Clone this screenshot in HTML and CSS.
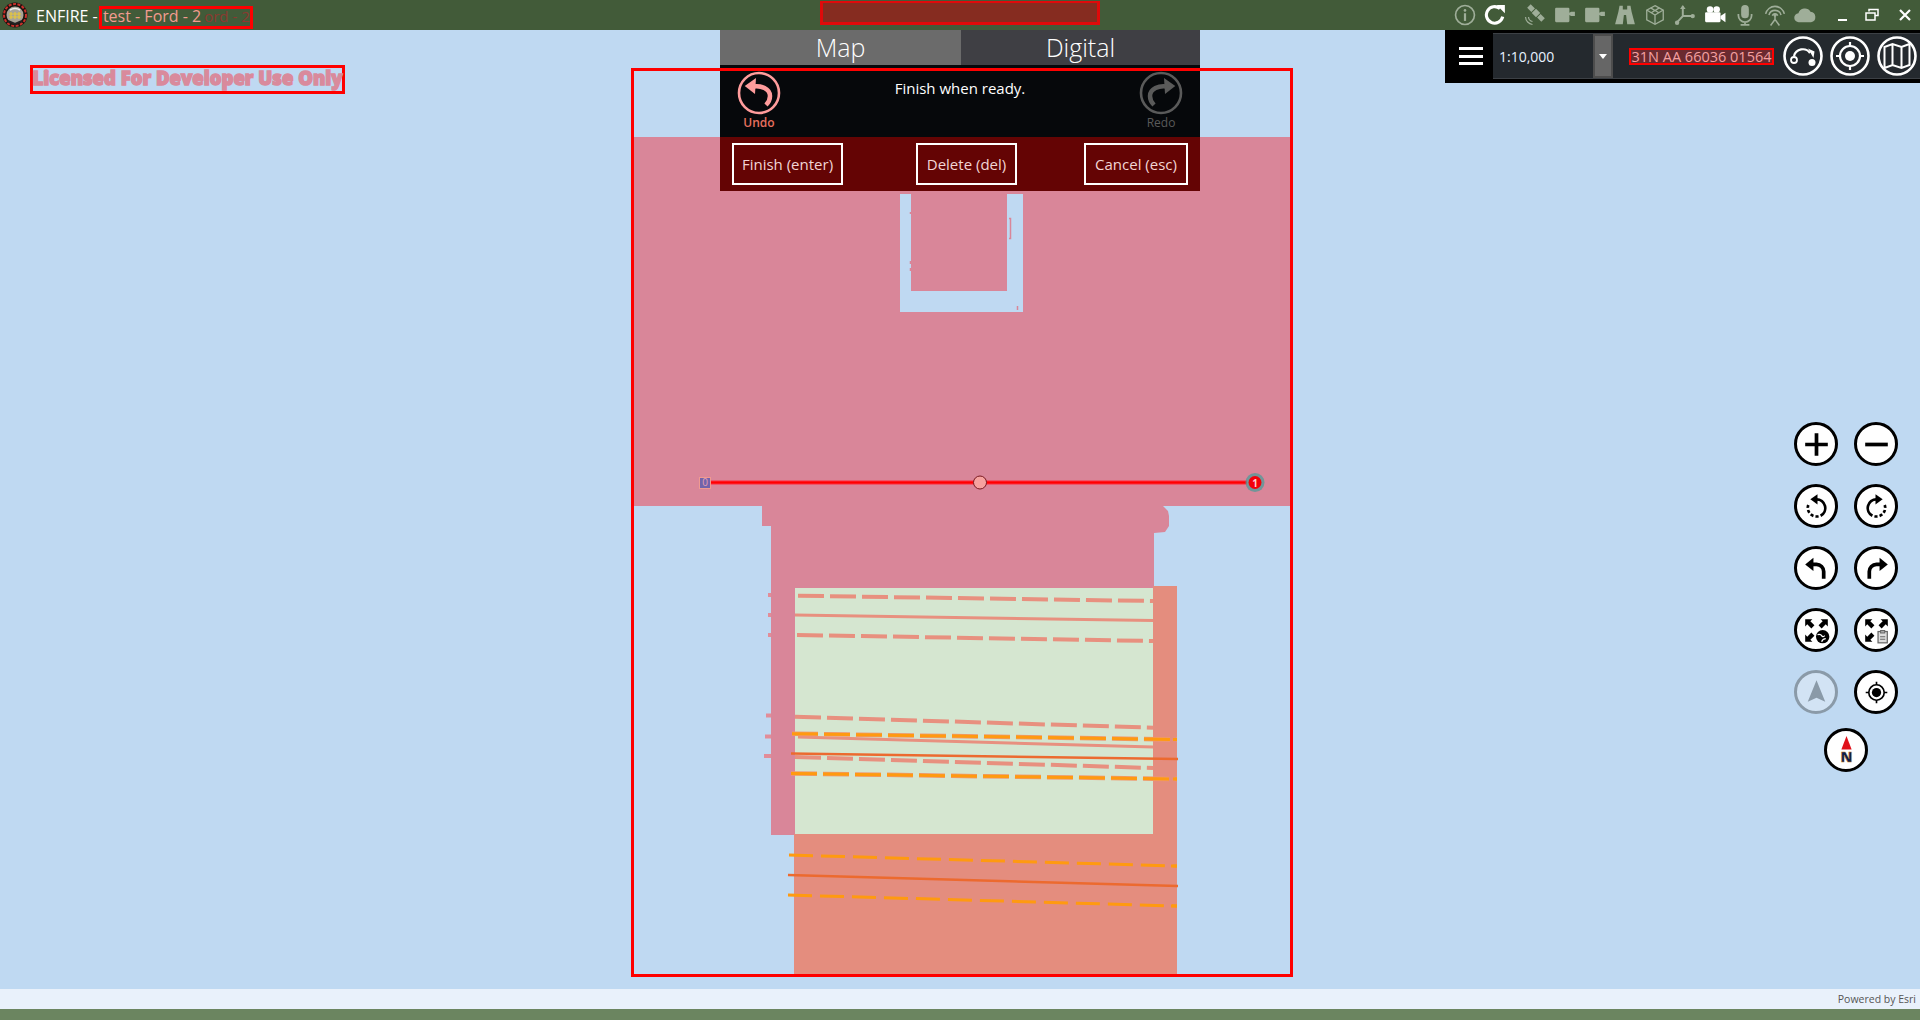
FILE: index.html
```html
<!DOCTYPE html>
<html lang="en">
<head>
<meta charset="utf-8">
<title>ENFIRE</title>
<link rel="stylesheet" href="styles.css">
</head>
<body>
<header class="titlebar">
  <div class="title-left">
    <svg class="logo" viewBox="0 0 26 26" width="26" height="26">
      <circle cx="13" cy="13" r="12.5" fill="#1a1410"/>
      <circle cx="13" cy="13" r="11" fill="none" stroke="#c8302a" stroke-width="2" stroke-dasharray="3 1.5"/>
      <circle cx="13" cy="13" r="8.500" fill="#a8a498"/>
      <path d="M7 12h12M7 15h12M9 10v7M13 10v7M17 10v7" stroke="#e6c83a" stroke-width="1.200" fill="none"/>
      <path d="M6 19l7 3 7-3" stroke="#222" stroke-width="2" fill="none"/>
      <path d="M8 8q5-3 10 0" stroke="#eee" stroke-width="1.500" fill="none"/>
    </svg>
    <span class="app-name">ENFIRE - </span>
    <span class="doc-name">test - Ford - 2</span>
    <span class="doc-ghost">ord - 2</span>
    <span class="redact-title"></span>
  </div>
  <span class="redact-center"></span>
  <div class="title-icons">
    <svg class="ti ti-info" viewBox="0 0 20 20"><circle cx="10" cy="10" r="8.600" fill="none" stroke="currentColor" stroke-width="1.500"/><circle cx="10" cy="5.800" r="1.200" fill="currentColor"/><rect x="9" y="8.400" width="2" height="7" fill="currentColor"/></svg>
    <svg class="ti ti-refresh" viewBox="0 0 20 20"><path d="M17 11.500A7.500 7.500 0 1 1 14.500 4.200" fill="none" stroke="currentColor" stroke-width="2.800"/><path d="M11.500 .8H19v7.500z" fill="currentColor"/></svg>
    <svg class="ti ti-sat" viewBox="0 0 22 22"><g fill="currentColor" transform="rotate(45 12 9)"><rect x="2" y="6.500" width="6" height="5"/><rect x="9" y="6" width="6" height="6"/><rect x="16" y="6.500" width="6" height="5"/></g><path d="M1.500 13a8 8 0 0 0 7 7.500M4.500 13a5 5 0 0 0 4 4.500" fill="none" stroke="currentColor" stroke-width="1.200"/></svg>
    <svg class="ti ti-video" viewBox="0 0 20 20"><path d="M1 4.500Q1 3.500 2 3.500h11q1 0 1 1v3.500l1.500-1h3.500v4h-3.500l-1.500-1v5.500q0 1-1 1H2q-1 0-1-1z" fill="currentColor"/></svg>
    <svg class="ti ti-video" viewBox="0 0 20 20"><path d="M1 4.500Q1 3.500 2 3.500h11q1 0 1 1v3.500l1.500-1h3.500v4h-3.500l-1.500-1v5.500q0 1-1 1H2q-1 0-1-1z" fill="currentColor"/></svg>
    <svg class="ti ti-bino" viewBox="0 0 20 20"><path d="M5 1.500h3V5h4V1.500h3l1 5.500 3 11.500h-7l-1-8.500H9l-1 8.500H1L4 7z" fill="currentColor"/></svg>
    <svg class="ti ti-cube" viewBox="0 0 20 20"><g fill="none" stroke="currentColor" stroke-width="1.200"><path d="M10 1.500l7.500 4v9l-7.500 4-7.500-4v-9z"/><path d="M2.500 5.500l7.500 4.500 7.500-4.500M10 10v8.500M6 3.500l7.500 4.500M14 3.500L6.500 8"/></g></svg>
    <svg class="ti ti-axes" viewBox="0 0 20 20"><path d="M8 2v9L2.500 17M8 11h9" fill="none" stroke="currentColor" stroke-width="1.800"/><path d="M5.500 4.500L8 1l2.500 3.500z" fill="currentColor"/><circle cx="17" cy="11" r="2" fill="currentColor"/><circle cx="2.800" cy="17" r="2" fill="currentColor"/></svg>
    <svg class="ti ti-cam" viewBox="0 0 20 20"><g fill="currentColor"><circle cx="5.500" cy="5" r="3"/><circle cx="11.500" cy="5" r="3"/><rect x="1" y="7.500" width="14" height="9" rx="1"/><path d="M15 11l4.500-3v8.500L15 13.500z"/></g></svg>
    <svg class="ti ti-mic" viewBox="0 0 20 20"><rect x="6.500" y="1" width="7" height="12" rx="3.500" fill="currentColor"/><path d="M4 9v1.500a6 6 0 0 0 12 0V9M10 16.500V19M6 19h8" fill="none" stroke="currentColor" stroke-width="1.600"/></svg>
    <svg class="ti ti-ant" viewBox="0 0 20 20"><g fill="none" stroke="currentColor" stroke-width="1.400"><path d="M1.500 9a8.700 8.700 0 0 1 17 0M4.500 10a5.700 5.700 0 0 1 11 0M7.500 10.500a2.800 2.800 0 0 1 5 0M10 10v4l-4 5.500M10 14l4 5.500"/></g><circle cx="10" cy="10" r="1.500" fill="currentColor"/></svg>
    <svg class="ti ti-cloud" viewBox="0 0 20 20"><path d="M4.500 16.500a4 4 0 0 1-.5-8 6 6 0 0 1 11-1.500 4.800 4.800 0 0 1 .5 9.500z" fill="currentColor"/></svg>
  </div>
  <div class="win-controls">
    <svg class="wc" viewBox="0 0 14 14"><rect x="2" y="11" width="9" height="2" fill="#fff"/></svg>
    <svg class="wc" viewBox="0 0 14 14"><path d="M4 3.500V1.500h9v6h-3M1 5h9v7H1z" fill="none" stroke="#fff" stroke-width="1.500"/></svg>
    <svg class="wc wc-close" viewBox="0 0 14 14"><path d="M2 2l10 10M12 2L2 12" stroke="#fff" stroke-width="2.200"/></svg>
  </div>
</header>

<main class="map">
  <svg class="map-canvas" viewBox="0 30 1920 959" width="1920" height="959">
    <polygon class="f-pink" points="633,137 1290,137 1290,506 1163,506 1168,511 1169,516 1169,526 1165,532 1154,533 1154,835 771,835 771,526 762,526 762,506 633,506"/>
    <polygon class="f-water" points="900,194 911,194 911,291 1007,291 1007,194 1023,194 1023,312 900,312"/>
    <path class="f-tick" d="M1009 218.500h1.500v20h-1.500M1017.500 306v4M910.500 212v2M910.500 261v3M910.500 268v3"/>
    <rect class="f-salmon" x="794" y="834" width="383" height="140"/>
    <rect class="f-salmon" x="1153" y="586" width="24" height="248"/>
    <rect class="f-green" x="795" y="588" width="358" height="246"/>

    <g class="l-salmon">
      <path class="dash" d="M798 595.700L1153 601"/>
      <path class="solid" d="M795 615L1153 620.600"/>
      <path class="dash" d="M797 635L1153 641"/>
      <path class="dash" d="M795 716.700L1153 727.700"/>
      <path class="solid" d="M798 737L1153 747"/>
      <path class="dash" d="M795 757L1153 768"/>
      <path class="dash wide" d="M792 733.700L1177 739.500"/>
      <path class="dash wide" d="M791 773.500L1177 779"/>
      <path class="stub" d="M768 595h3M768 615h3M768 635h3M766 715.500h5M765 736.500h6M764 756h7"/>
    </g>
    <g class="l-orange">
      <path class="dash-up" d="M792 733.700L1177 739.500"/>
      <path class="dash-up" d="M791 773.500L1177 779"/>
      <path class="dash" d="M789 855L1177 866"/>
      <path class="dash" d="M788 895L1177 906"/>
      <path class="solid" d="M791 753.500L1178 759"/>
      <path class="solid" d="M788 875L1178 886"/>
      <path class="end-stub" d="M1173 739.500h4M1173 779h4M1171 866h6M1171 906h6"/>
    </g>

    <g class="sketch">
      <line class="sk-halo" x1="711" y1="482.500" x2="1247" y2="482.500"/>
      <line class="sk-line" x1="711" y1="482.500" x2="1247" y2="482.500"/>
      <circle class="sk-mid" cx="980" cy="482.500" r="6.500"/>
      <circle class="sk-glow" cx="1255" cy="482.500" r="9.500"/>
      <circle class="sk-end" cx="1255" cy="482.500" r="6.500"/>
      <text class="sk-end-label" x="1255" y="486.500">1</text>
      <rect class="sk-start" x="699.500" y="477.500" width="11" height="11"/>
      <text class="sk-start-label" x="705" y="486">0</text>
    </g>
  </svg>

  <div class="license"><span class="license-text">Licensed For Developer Use Only</span></div>

  <section class="sketch-panel">
    <div class="tabs">
      <div class="tab tab-active">Map</div>
      <div class="tab">Digital</div>
    </div>
    <div class="panel-body">
      <div class="history history-on">
        <svg viewBox="0 0 44 44" width="44" height="44"><circle cx="22" cy="22" r="20" fill="none" stroke="currentColor" stroke-width="2.600"/><path d="M16 15.500C24 14 33 18 33 25Q33 30 29 34" fill="none" stroke="currentColor" stroke-width="4.500"/><path d="M7.700 15L19 7l-1 16z" fill="currentColor"/></svg>
        <span>Undo</span>
      </div>
      <p class="prompt">Finish when ready.</p>
      <div class="history history-off">
        <svg viewBox="0 0 44 44" width="44" height="44"><g transform="matrix(-1 0 0 1 44 0)"><circle cx="22" cy="22" r="20" fill="none" stroke="currentColor" stroke-width="2.600"/><path d="M16 15.500C24 14 33 18 33 25Q33 30 29 34" fill="none" stroke="currentColor" stroke-width="4.500"/><path d="M7.700 15L19 7l-1 16z" fill="currentColor"/></g></svg>
        <span>Redo</span>
      </div>
    </div>
    <div class="panel-actions">
      <button class="action action-finish">Finish (enter)</button>
      <button class="action action-delete">Delete (del)</button>
      <button class="action action-cancel">Cancel (esc)</button>
    </div>
  </section>

  <div class="redact-area"></div>

  <section class="toolbar">
    <div class="menu-cell"><span class="burger"></span></div>
    <div class="tool-inner">
      <span class="scale">1:10,000</span>
      <span class="scale-drop"><i class="caret"></i></span>
      <span class="coords">31N AA 66036 01564</span>
      <div class="round-set">
        <svg class="round" viewBox="0 0 40 40"><circle cx="20" cy="20" r="18.500" fill="none" stroke="#fff" stroke-width="2.600"/><circle cx="11" cy="24" r="3" fill="none" stroke="#fff" stroke-width="1.800"/><circle cx="29" cy="26.500" r="3.500" fill="#fff"/><path d="M11 20a9 9 0 0 1 16-3" fill="none" stroke="#fff" stroke-width="2.200"/><path d="M25 12.500l6.500 3-1 6.500z" fill="#fff"/></svg>
        <svg class="round" viewBox="0 0 40 40"><circle cx="20" cy="20" r="18.500" fill="none" stroke="#fff" stroke-width="2.600"/><circle cx="20" cy="20" r="10" fill="none" stroke="#fff" stroke-width="2.200"/><circle cx="20" cy="20" r="5" fill="#fff"/><path d="M20 6v5M20 29v5M6 20h5M29 20h5" stroke="#fff" stroke-width="2.200"/></svg>
        <svg class="round" viewBox="0 0 40 40"><circle cx="20" cy="20" r="18.500" fill="none" stroke="#fff" stroke-width="2.600"/><path d="M7.500 11l8-3 9 3 8-3v21l-8 3-9-3-8 3zM15.500 8v21M24.500 11v21" fill="none" stroke="#fff" stroke-width="2"/></svg>
      </div>
    </div>
  </section>

  <nav class="map-tools">
    <button class="tool"><svg viewBox="0 0 36 36"><path d="M18 7v22M7 18h22" stroke="#000" stroke-width="3.600"/></svg></button>
    <button class="tool"><svg viewBox="0 0 36 36"><path d="M7 18h22" stroke="#000" stroke-width="3.600"/></svg></button>
    <button class="tool"><svg viewBox="0 0 36 36"><path d="M18 11A8.500 8.500 0 0 1 22 27" fill="none" stroke="#000" stroke-width="2.600"/><path d="M20 27.500A8.500 8.500 0 0 1 10 16.500" fill="none" stroke="#000" stroke-width="2.600" stroke-dasharray="3 2"/><path d="M12 11l7-5v10z" fill="#000"/></svg></button>
    <button class="tool"><svg viewBox="0 0 36 36"><g transform="matrix(-1 0 0 1 36 0)"><path d="M18 11A8.500 8.500 0 0 1 22 27" fill="none" stroke="#000" stroke-width="2.600"/><path d="M20 27.500A8.500 8.500 0 0 1 10 16.500" fill="none" stroke="#000" stroke-width="2.600" stroke-dasharray="3 2"/><path d="M12 11l7-5v10z" fill="#000"/></g></svg></button>
    <button class="tool"><svg viewBox="0 0 36 36"><path d="M13 14h5a7 7 0 0 1 7 7v7" fill="none" stroke="#000" stroke-width="3.600"/><path d="M7 14l8-6.500v13z" fill="#000"/></svg></button>
    <button class="tool"><svg viewBox="0 0 36 36"><path d="M23 14h-5a7 7 0 0 0-7 7v7" fill="none" stroke="#000" stroke-width="3.600"/><path d="M29 14l-8-6.500v13z" fill="#000"/></svg></button>
    <button class="tool"><svg viewBox="0 0 36 36"><g fill="#000"><path d="M7 7h7l-2 2 4 4-3 3-4-4-2 2zM29 7v7l-2-2-4 4-3-3 4-4-2-2zM7 29v-7l2 2 4-4 3 3-4 4 2 2z"/><circle cx="24" cy="24" r="6.500"/></g><path d="M19 22q3-1 4 1t3 0M23 29q1-3 4-3" stroke="#fff" stroke-width="1.200" fill="none"/></svg></button>
    <button class="tool"><svg viewBox="0 0 36 36"><g fill="#000"><path d="M7 7h7l-2 2 4 4-3 3-4-4-2 2zM29 7v7l-2-2-4 4-3-3 4-4-2-2zM7 29v-7l2 2 4-4 3 3-4 4 2 2z"/></g><rect x="19.500" y="19" width="9" height="11" fill="#ddd" stroke="#666" stroke-width="1.200"/><path d="M22 18h4v2.500h-4zM21.500 24h5M21.500 26.500h5" stroke="#666" stroke-width="1" fill="#aaa"/></svg></button>
    <button class="tool tool-disabled"><svg viewBox="0 0 36 36"><path d="M18 6l8.500 21-8.500-4-8.500 4z" fill="#8a9aa8"/></svg></button>
    <button class="tool"><svg viewBox="0 0 36 36"><circle cx="18" cy="18" r="7.500" fill="none" stroke="#000" stroke-width="1.600"/><circle cx="18" cy="18" r="4.500" fill="#000"/><path d="M18 7.500v3M18 25.500v3M7.500 18h3M25.500 18h3" stroke="#000" stroke-width="1.600"/></svg></button>
    <button class="tool tool-north"><svg viewBox="0 0 36 36"><path d="M18 4l5 13H13z" fill="#e0101a"/><text class="north" x="18" y="29.500">N</text></svg></button>
  </nav>
</main>

<footer class="attribution">Powered by Esri</footer>
<footer class="statusbar"></footer>
</body>
</html>
```
FILE: styles.css
```css
* { box-sizing: border-box; }
html, body { margin: 0; height: 100%; }
body {
  width: 1920px;
  height: 1020px;
  overflow: hidden;
  display: flex;
  flex-direction: column;
  font-family: "Open Sans", "Noto Sans", sans-serif;
  background: #bfd9f2;
}

/* Title bar */
.titlebar {
  height: 30px;
  flex: none;
  display: flex;
  align-items: center;
  background: #425b39;
  color: #fff;
  position: relative;
}
.title-left { display: flex; align-items: center; padding-left: 2px; position: relative; height: 30px; }
.logo { margin-right: 8px; flex: none; }
.app-name, .doc-name, .doc-ghost { font-size: 16px; white-space: pre; padding-top: 1px; }
.app-name { margin-right: 1px; }
.doc-name { color: #f39c90; }
.doc-ghost { color: #8a3a30; margin-left: 3px; font-size: 15px; }
.redact-title {
  position: absolute; left: 99px; top: 6px; width: 154px; height: 23px;
  border: 3px solid #f00;
}
.redact-center {
  position: absolute; left: 820px; top: 1px; width: 280px; height: 24px;
  border: 3px solid #e00a0a; border-top-width: 2px;
  background: #862c20;
}
.title-icons {
  margin-left: auto;
  display: flex;
  align-items: center;
  gap: 8px;
  color: #9fae99;
  height: 30px;
}
.ti { width: 22px; height: 22px; flex: none; display: block; }
.ti-refresh, .ti-cam { color: #fff; }
.ti-refresh { margin-right: 10px; }
.win-controls { display: flex; align-items: center; gap: 15px; margin-left: 20px; padding-right: 8px; }
.wc { width: 14px; height: 14px; display: block; }
.wc-close { margin-left: 4px; }

/* Map */
.map { flex: 1; position: relative; background: #bfd9f2; overflow: hidden; }
.map-canvas { position: absolute; left: 0; top: 0; display: block; }
.f-pink { fill: #d98699; }
.f-water { fill: #bfd9f2; }
.f-tick { fill: none; stroke: #d98699; stroke-width: 1.500; }
.f-salmon { fill: #e48d7e; }
.f-green { fill: #d5e6d0; }
.l-salmon path, .l-orange path { fill: none; }
.l-salmon path { stroke: #e8907f; }
.l-salmon .dash { stroke-width: 4; stroke-dasharray: 26 6; }
.l-salmon .wide { stroke-width: 4.500; stroke: #ee9a70; }
.l-salmon .solid { stroke-width: 3; }
.l-salmon .stub { stroke-width: 4; stroke: #e28d99; }
.l-orange .dash-up { stroke: #ff9a10; stroke-width: 3; stroke-dasharray: 26 6; }
.l-orange .dash { stroke: #ff9a10; stroke-width: 3; stroke-dasharray: 24 8; }
.l-orange .end-stub { stroke: #ff9a10; stroke-width: 3; }
.l-orange .solid { stroke: #ec6a2f; stroke-width: 2.500; }
.sk-halo { stroke: #ff2b3c; stroke-width: 4; }
.sk-line { stroke: #f00; stroke-width: 2; }
.sk-mid { fill: #f6a29f; stroke: #7a1a20; stroke-width: 1; }
.sk-glow { fill: #4f9a98; opacity: .75; }
.sk-end { fill: #f3000a; }
.sk-end-label { fill: #ffd0d0; font: 700 10px "Open Sans", sans-serif; text-anchor: middle; }
.sk-start { fill: #7263ab; stroke: #f09a90; stroke-width: 1; }
.sk-start-label { fill: #e8a0b0; font: 400 10px "Open Sans", sans-serif; text-anchor: middle; }

.redact-area {
  position: absolute;
  left: 631px;
  top: 38px;
  width: 662px;
  height: 909px;
  border: 3px solid #f00;
  pointer-events: none;
}

.license {
  position: absolute;
  left: 30px;
  top: 35px;
  width: 315px;
  height: 29px;
  border: 3px solid #f00;
  padding-bottom: 4px;
  display: flex;
  align-items: center;
  justify-content: center;
}
.license-text {
  color: #d98a9c;
  font-size: 18.500px;
  font-weight: 800;
  -webkit-text-stroke: 1.400px #d98a9c;
  white-space: nowrap;
}

/* Sketch panel */
.sketch-panel {
  position: absolute;
  left: 720px;
  top: 0;
  width: 480px;
  display: flex;
  flex-direction: column;
}
.tabs { display: flex; height: 35px; }
.tab {
  flex: 1;
  display: flex;
  align-items: center;
  justify-content: center;
  padding-bottom: 2px;
  font-size: 25px;
  font-weight: 300;
  color: #fff;
  background: #3f3f44;
}
.tab-active { background: #6b6b6b; flex: none; width: 241px; }
.panel-body {
  height: 72px;
  background: #06080b;
  display: flex;
  justify-content: space-between;
  padding: 6px 17px 0;
}
.history { width: 44px; display: flex; flex-direction: column; align-items: center; }
.history svg { display: block; flex: none; }
.history span { font-size: 12px; line-height: 15px; margin-top: 0; }
.history-on { color: #ff9c9c; }
.history-on span { color: #e8705f; font-weight: 600; }
.history-off { color: #5a5a5a; }
.prompt { margin: 7px 0 0; color: #fff; font-size: 15px; line-height: 20px; }
.panel-actions {
  height: 54px;
  background: #640404;
  display: flex;
  align-items: flex-start;
  padding: 6px 0 0 12px;
}
.action {
  height: 42px;
  padding: 0;
  border: 2px solid #fff;
  background: transparent;
  color: #f2d5d5;
  font: 400 15px "Open Sans", sans-serif;
}
.action-finish { width: 111px; }
.action-delete { width: 101px; margin-left: 73px; }
.action-cancel { width: 104px; margin-left: 67px; }

/* Toolbar */
.toolbar {
  position: absolute;
  right: 0;
  top: 0;
  width: 475px;
  height: 53px;
  background: #000;
  display: flex;
  padding: 3px 0 4px;
}
.menu-cell { width: 48px; flex: none; display: flex; align-items: center; justify-content: center; padding-left: 4px; background: #000; }
.burger {
  display: block;
  width: 24px;
  height: 18px;
  border-top: 3px solid #fff;
  border-bottom: 3px solid #fff;
  position: relative;
}
.burger::after {
  content: "";
  position: absolute;
  left: 0; right: 0; top: 4.500px;
  height: 3px;
  background: #fff;
}
.tool-inner {
  flex: 1;
  display: flex;
  align-items: center;
  background: #24292e;
  border-top: 1px solid #3c4045;
  border-bottom: 1px solid #3c4045;
}
.scale { color: #e8f2ff; font-size: 14px; width: 100px; padding-left: 6px; flex: none; }
.scale-drop {
  width: 20px;
  height: 100%;
  flex: none;
  background: #666;
  border: 2px solid #4d4d4d;
  display: flex;
  align-items: center;
  justify-content: center;
}
.caret { width: 0; height: 0; border: 4px solid transparent; border-top: 5px solid #fff; border-bottom: 0; }
.coords {
  margin-left: 16px;
  width: 145px;
  height: 17px;
  flex: none;
  border: 2px solid #f00;
  background: #6a2a30;
  color: #f4a0a0;
  font-size: 14.500px;
  line-height: 13px;
  text-align: center;
  white-space: nowrap;
  overflow: hidden;
}
.round-set { display: flex; gap: 7px; margin-left: 9px; }
.round { width: 40px; height: 40px; display: block; }

/* Map tools */
.map-tools {
  position: absolute;
  right: 22px;
  top: 392px;
  display: grid;
  grid-template-columns: 44px 44px;
  column-gap: 16px;
  row-gap: 18px;
}
.tool {
  width: 44px;
  height: 44px;
  padding: 0;
  border-radius: 50%;
  border: 3.500px solid #000;
  background: #fff;
  display: flex;
  align-items: center;
  justify-content: center;
}
.tool svg { width: 37px; height: 37px; display: block; }
.tool-disabled { background: #d2e3f4; border-color: #8a9aa8; }
.tool-north { grid-column: 1 / span 2; justify-self: center; margin-top: -4px; }
.north { font: 800 14px "Open Sans", sans-serif; fill: #0a1f50; stroke: #c47a10; stroke-width: .4; text-anchor: middle; }

/* Footers */
.attribution {
  height: 20px;
  flex: none;
  background: #e9f1fb;
  color: #555;
  font-size: 10.500px;
  line-height: 21px;
  text-align: right;
  padding-right: 4px;
}
.statusbar { height: 11px; flex: none; background: #6b8560; }
```
